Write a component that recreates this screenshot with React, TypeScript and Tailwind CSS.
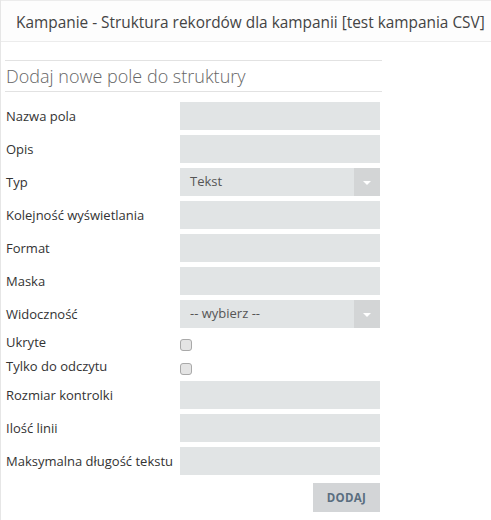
import React from "react";

const font = { fontFamily: '"Open Sans", "Noto Sans", sans-serif' };

function Field({ label, children }: { label: string; children: React.ReactNode }) {
  return (
    <div className="flex items-center h-[28px]">
      <div className="w-[174px] text-[13px] text-[#333] leading-none">{label}</div>
      {children}
    </div>
  );
}

function Input() {
  return <div className="w-[200px] h-[28px] bg-[#e1e4e5]" />;
}

function Select({ value }: { value: string }) {
  return (
    <div className="w-[200px] h-[28px] bg-[#e1e4e5] flex items-center">
      <div className="flex-1 pl-[10px] text-[13px] text-[#555]">{value}</div>
      <div className="w-[26px] h-full bg-[#d3d5d6] flex items-center justify-center">
        <svg width="8" height="5" viewBox="0 0 8 5" className="mt-[2px]">
          <polygon points="0,0 8,0 4,4" fill="#ffffff" />
        </svg>
      </div>
    </div>
  );
}

function Check({ label }: { label: string }) {
  return (
    <div className="flex items-center h-[19px]">
      <div className="w-[174px] text-[13px] text-[#333] leading-none">{label}</div>
      <div className="mt-[4px] w-[12px] h-[12px] rounded-[3px] border border-[#a9a9a9] bg-[#e4e4e4]" />
    </div>
  );
}

export default function App() {
  return (
    <div style={font} className="w-[491px] h-[520px] bg-white border-l border-[#e6e6e6] overflow-hidden">
      <div className="border-t border-[#ececec] border-b bg-[#fdfdfd] h-[42px] flex items-center pl-[15px] pt-[3px]">
        <span className="text-[15.4px] text-[#444] whitespace-nowrap">
          Kampanie - Struktura rekordów dla kampanii [test kampania CSV]
        </span>
      </div>
      <div className="ml-[4px] mt-[18px] w-[377px] border-t border-b border-[#e2e2e2] h-[32px] flex items-center pl-[1px]">
        <span className="text-[18px] font-light text-[#666] leading-none">Dodaj nowe pole do struktury</span>
      </div>
      <div className="ml-[5px] mt-[10px] flex flex-col gap-[5px]">
        <Field label="Nazwa pola"><Input /></Field>
        <Field label="Opis"><Input /></Field>
        <Field label="Typ"><Select value="Tekst" /></Field>
        <Field label="Kolejność wyświetlania"><Input /></Field>
        <Field label="Format"><Input /></Field>
        <Field label="Maska"><Input /></Field>
        <Field label="Widoczność"><Select value="-- wybierz --" /></Field>
        <Check label="Ukryte" />
        <Check label="Tylko do odczytu" />
        <Field label="Rozmiar kontrolki"><Input /></Field>
        <Field label="Ilość linii"><Input /></Field>
        <Field label="Maksymalna długość tekstu"><Input /></Field>
        <div className="w-[374px] flex justify-end mt-[3px]">
          <button className="w-[67px] h-[29px] bg-[#d3d5d7] text-[11.5px] font-bold text-[#5a6e80] tracking-[0.3px]">
            DODAJ
          </button>
        </div>
      </div>
    </div>
  );
}
